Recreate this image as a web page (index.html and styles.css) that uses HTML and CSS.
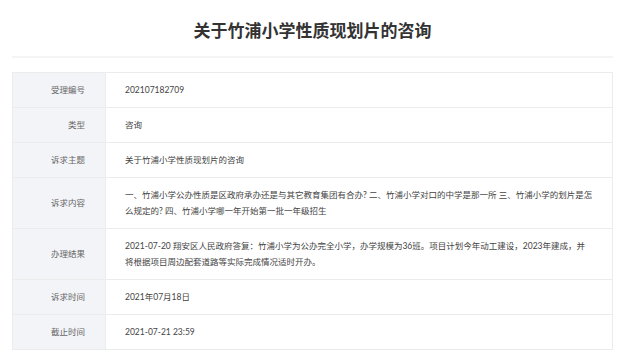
FILE: index.html
```html
<!DOCTYPE html>
<html lang="zh-CN">
<head>
<meta charset="utf-8">
<title>关于竹浦小学性质现划片的咨询</title>
<link rel="stylesheet" href="styles.css">
</head>
<body>
<div class="page">
  <h1 class="title">关于竹浦小学性质现划片的咨询</h1>
  <div class="divider"></div>
  <table class="info">
    <tr><th>受理编号</th><td>202107182709</td></tr>
    <tr><th>类型</th><td>咨询</td></tr>
    <tr><th>诉求主题</th><td>关于竹浦小学性质现划片的咨询</td></tr>
    <tr><th>诉求内容</th><td>一、竹浦小学公办性质是区政府承办还是与其它教育集团有合办? 二、竹浦小学对口的中学是那一所 三、竹浦小学的划片是怎么规定的? 四、竹浦小学哪一年开始第一批一年级招生</td></tr>
    <tr><th>办理结果</th><td>2021-07-20 翔安区人民政府答复：竹浦小学为公办完全小学，办学规模为36班。项目计划今年动工建设，2023年建成，并将根据项目周边配套道路等实际完成情况适时开办。</td></tr>
    <tr><th>诉求时间</th><td>2021年07月18日</td></tr>
    <tr><th>截止时间</th><td>2021-07-21 23:59</td></tr>
  </table>
</div>
</body>
</html>
```
FILE: styles.css
```css
html, body {
  margin: 0;
  padding: 0;
  background: #ffffff;
}
body {
  font-family: "Noto Sans CJK SC", "Noto Sans", sans-serif;
}
.page {
  padding: 0 12px;
}
.title {
  margin: 0;
  padding: 18px 0 14px;
  font-size: 17px;
  line-height: 24px;
  font-weight: bold;
  color: #333333;
  text-align: center;
}
.divider {
  height: 2px;
  background: #f4f4f5;
  margin-bottom: 14px;
}
.info {
  width: 100%;
  border-collapse: collapse;
  border: 1px solid #ececec;
  font-family: Lato, "Noto Sans CJK SC", sans-serif;
  font-size: 8.5px;
  line-height: 16px;
}
.info th, .info td {
  border-bottom: 1px solid #ececec;
  padding: 9px 19px;
  vertical-align: middle;
}
.info th {
  width: 53px;
  background: #f3f4f8;
  color: #666666;
  font-weight: normal;
  text-align: right;
  padding-right: 20px;
  border-right: 1px solid #ececec;
  white-space: nowrap;
}
.info td {
  color: #444444;
  text-align: left;
}
```
